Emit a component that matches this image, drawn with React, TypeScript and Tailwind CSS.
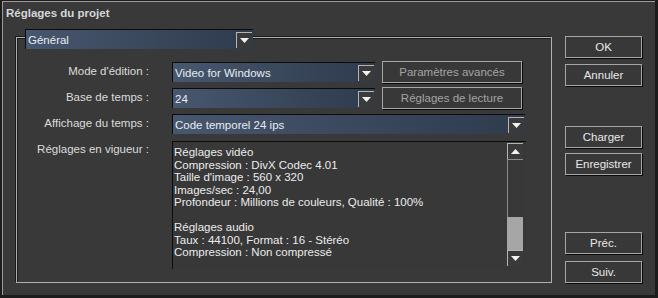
import React from "react";

function Arrow({ up = false }: { up?: boolean }) {
  return (
    <div className="w-[16px] h-[16px] bg-[#3a3a3a] border-t border-l border-[#b4b4b4] border-r-[#0c0c0c] border-b-[#0c0c0c] flex items-center justify-center shrink-0">
      <svg width="9" height="5" viewBox="0 0 9 5">
        {up ? <polygon points="0,5 9,5 4.5,0" fill="#f2f2f2" /> : <polygon points="0,0 9,0 4.5,5" fill="#f2f2f2" />}
      </svg>
    </div>
  );
}

function Drop({ text, w }: { text: string; w: string }) {
  return (
    <div className={`${w} h-[20px] flex items-center border-t border-l border-[#0c0c0c] border-r-[#a8a8a8] border-b-[#a8a8a8] bg-linear-to-r from-[#47576e] to-[#2f3b4d] pr-[1px]`}>
      <span className="flex-1 pl-[2px] text-[11.5px] leading-[14px] text-[#e6ecf2] whitespace-nowrap">{text}</span>
      <Arrow />
    </div>
  );
}

function Btn({ label, disabled = false, className = "" }: { label: string; disabled?: boolean; className?: string }) {
  return (
    <div
      className={`h-[22px] flex items-center justify-center bg-[#383838] border border-[#a6a6a6] shadow-[1px_1px_0_#0a0a0a] text-[11.5px] leading-[14px] whitespace-nowrap ${
        disabled ? "text-[#a4a4a4]" : "text-[#e8e8e8]"
      } ${className}`}
    >
      {label}
    </div>
  );
}

export default function App() {
  const lines = [
    "Réglages vidéo",
    "Compression : DivX Codec 4.01",
    "Taille d'image : 560 x 320",
    "Images/sec : 24,00",
    "Profondeur : Millions de couleurs, Qualité : 100%",
    "\u00a0",
    "Réglages audio",
    "Taux : 44100, Format : 16 - Stéréo",
    "Compression : Non compressé",
  ];
  return (
    <div className="w-[658px] h-[298px] bg-[#1c1c1c] font-['Liberation_Sans',Arial,sans-serif] overflow-hidden">
      <div className="mt-[1px] ml-[2px] w-[653px] h-[294px] bg-[#393939] border-t border-l border-[#9c9c9c] border-r-[#8a8a8a] border-b-[#0a0a0a]">
        <div className="h-[35px] pl-[3px] pt-[3px] text-[11.5px] font-bold leading-[16px] text-[#d6d6d6]">Réglages du projet</div>
        <div className="flex">
          {/* group box */}
          <div className="ml-[13px] w-[536px] h-[246px] border border-[#b0b0b0] shadow-[inset_1px_1px_0_#1a1a1a,-1px_-1px_0_#1a1a1a]">
            <div className="-mt-[9px] ml-[8px] w-[228px]">
              <Drop text="Général" w="w-[228px]" />
            </div>
            <div className="mt-[13px] flex flex-col">
              <div className="flex items-center h-[20px]">
                <div className="w-[132px] text-right text-[11.5px] text-[#dcdcdc] whitespace-nowrap">Mode d'édition :</div>
                <div className="ml-[23px]"><Drop text="Video for Windows" w="w-[203px]" /></div>
                <div className="ml-[7px]"><Btn label="Paramètres avancés" disabled className="w-[140px] h-[20px]" /></div>
              </div>
              <div className="flex items-center h-[20px] mt-[6px]">
                <div className="w-[132px] text-right text-[11.5px] text-[#dcdcdc] whitespace-nowrap">Base de temps :</div>
                <div className="ml-[23px]"><Drop text="24" w="w-[203px]" /></div>
                <div className="ml-[7px]"><Btn label="Réglages de lecture" disabled className="w-[140px] h-[20px]" /></div>
              </div>
              <div className="flex items-center h-[20px] mt-[6px]">
                <div className="w-[132px] text-right text-[11.5px] text-[#dcdcdc] whitespace-nowrap">Affichage du temps :</div>
                <div className="ml-[23px]"><Drop text="Code temporel 24 ips" w="w-[353px]" /></div>
              </div>
              <div className="flex items-start mt-[7px]">
                <div className="w-[132px] pt-[1px] text-right text-[11.5px] leading-[14px] text-[#dcdcdc] whitespace-nowrap">Réglages en vigueur :</div>
                <div className="ml-[23px] w-[354px] h-[128px] flex border-t border-l border-[#0c0c0c] border-r-[#a8a8a8] border-b-[#a8a8a8] bg-[#383838]">
                  <div className="flex-1 pl-[1px] pt-[4px] text-[11.5px] leading-[12.5px] text-[#ececec] whitespace-nowrap overflow-hidden">
                    {lines.map((l, i) => (
                      <div key={i}>{l}</div>
                    ))}
                  </div>
                  <div className="w-[17px] mr-[2px] mt-[1px] flex flex-col">
                    <Arrow up />
                    <div className="h-[58px] border-t border-l border-[#8c8c8c] border-r-[#0c0c0c] border-b-[#0c0c0c] bg-[#383838] w-[16px]" />
                    <div className="h-[33px] bg-[#a6a6a6] w-[16px]" />
                    <Arrow />
                  </div>
                </div>
              </div>
            </div>
          </div>
          {/* right buttons */}
          <div className="ml-[13px] -mt-[1px] w-[77px] flex flex-col">
            <Btn label="OK" />
            <Btn label="Annuler" className="mt-[6px]" />
            <Btn label="Charger" className="mt-[40px]" />
            <Btn label="Enregistrer" className="mt-[5px]" />
            <Btn label="Préc." className="mt-[57px]" />
            <Btn label="Suiv." className="mt-[7px]" />
          </div>
        </div>
      </div>
    </div>
  );
}
